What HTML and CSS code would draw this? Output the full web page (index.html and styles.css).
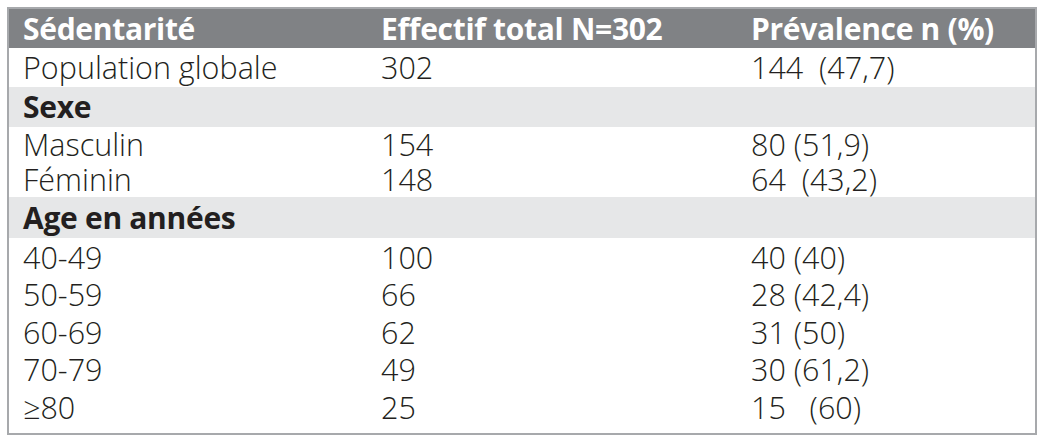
FILE: index.html
```html
<!DOCTYPE html>
<html lang="fr">
<head>
<meta charset="utf-8">
<link rel="stylesheet" href="styles.css">
</head>
<body>
<div class="wrap">
<table class="tbl">
  <colgroup><col class="c1"><col class="c2"><col class="c3"></colgroup>
  <thead>
    <tr class="head"><th>Sédentarité</th><th>Effectif total N=302</th><th>Prévalence n (%)</th></tr>
  </thead>
  <tbody>
    <tr class="r39"><td>Population globale</td><td>302</td><td>144&nbsp; (47,7)</td></tr>
    <tr class="group"><td colspan="3">Sexe</td></tr>
    <tr class="r35"><td>Masculin</td><td>154</td><td>80 (51,9)</td></tr>
    <tr class="r35"><td>Féminin</td><td>148</td><td>64&nbsp; (43,2)</td></tr>
    <tr class="group g41"><td colspan="3">Age en années</td></tr>
    <tr class="r37"><td>40-49</td><td>100</td><td>40 (40)</td></tr>
    <tr class="r37"><td>50-59</td><td>66</td><td>28 (42,4)</td></tr>
    <tr class="r37"><td>60-69</td><td>62</td><td>31 (50)</td></tr>
    <tr class="r37"><td>70-79</td><td>49</td><td>30 (61,2)</td></tr>
    <tr class="r37"><td>≥80</td><td>25</td><td>15 &nbsp; (60)</td></tr>
    <tr class="pad"><td colspan="3"></td></tr>
  </tbody>
</table>
</div>
</body>
</html>
```
FILE: styles.css
```css
html, body { margin: 0; padding: 0; background: #fff; }
.wrap { padding: 7px 0 0 7px; }
.tbl {
  width: 1030px;
  border-collapse: collapse;
  border: 2px solid #a7a9ac;
  font-family: "Open Sans", "Source Sans Pro", sans-serif;
  font-size: 30.5px;
  color: #231f20;
  table-layout: fixed;
}
.c1 { width: 359px; }
.c2 { width: 370px; }
.tbl th, .tbl td { padding: 0 0 0 14px; text-align: left; white-space: nowrap; vertical-align: middle; }
.head { background: #808285; height: 40px; }
.head th { color: #fff; font-weight: 700; font-size: 30px; line-height: 1; letter-spacing: -0.3px; }
.tbl td { font-weight: 300; line-height: 1; }
.r39 { height: 39px; }
.r35 { height: 35px; }
.r37 { height: 37.5px; }
.group { background: #e6e7e8; height: 40px; }
.group td { font-weight: 700; font-size: 30px; letter-spacing: -0.3px; }
.g41 { height: 41px; }
.pad { height: 8px; }
```
